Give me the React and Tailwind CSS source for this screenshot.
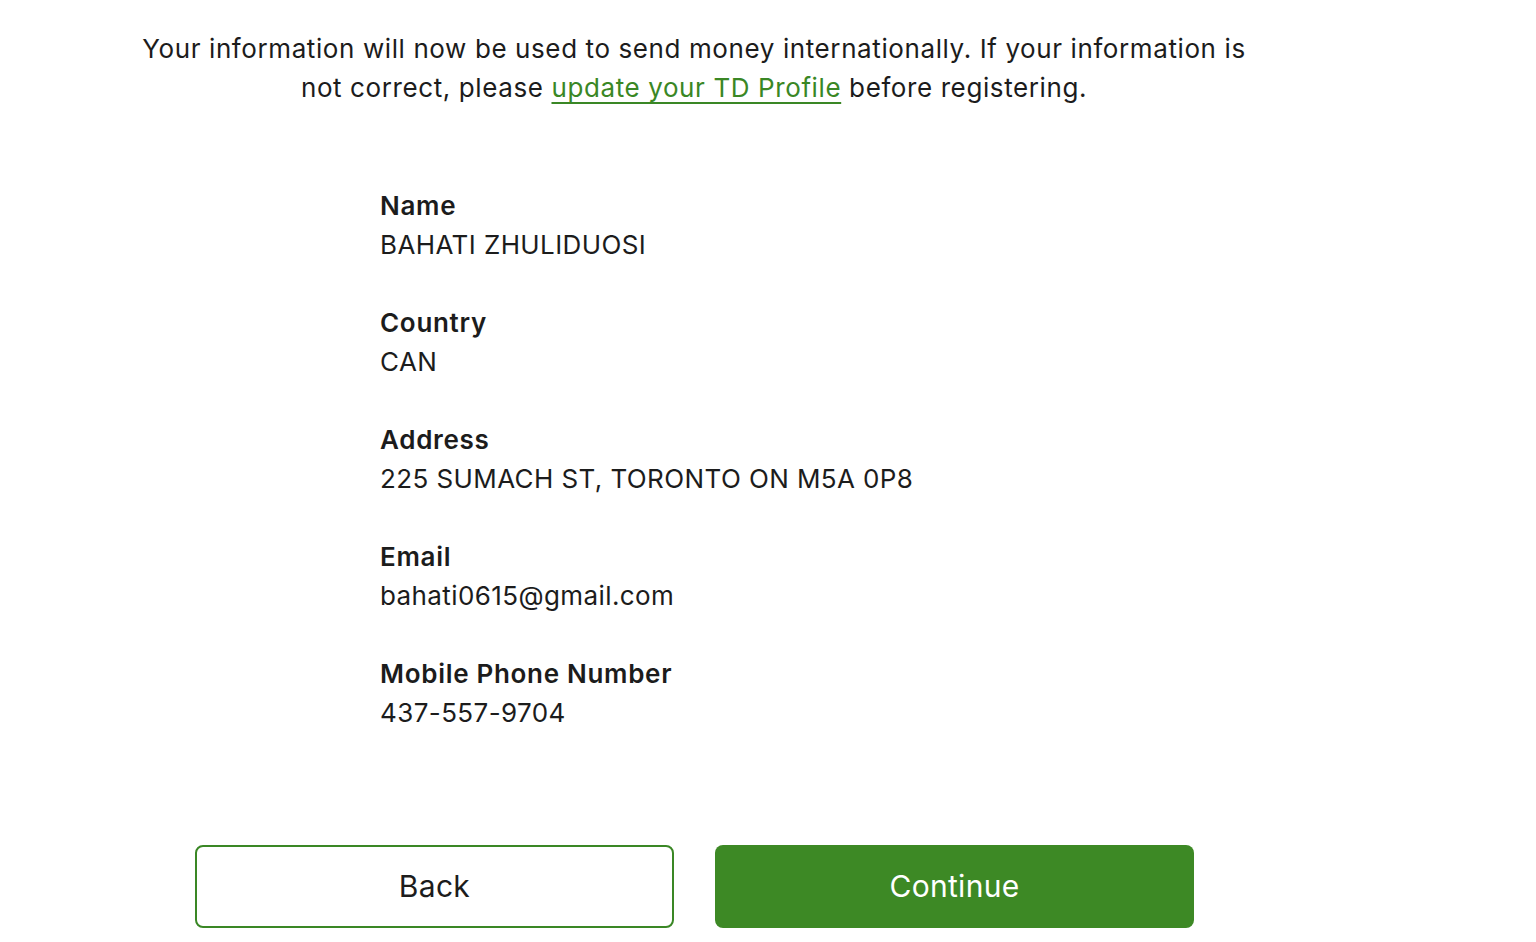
const FIELDS = [
  { label: 'Name', value: 'BAHATI ZHULIDUOSI' },
  { label: 'Country', value: 'CAN' },
  { label: 'Address', value: '225 SUMACH ST, TORONTO ON M5A 0P8' },
  { label: 'Email', value: 'bahati0615@gmail.com' },
  { label: 'Mobile Phone Number', value: '437-557-9704' },
]

export default function App() {
  return (
    <div className="min-h-screen bg-white font-['Inter','Liberation_Sans',sans-serif] text-[#1c1c1c]">
      <div className="ml-[139px] flex w-[1110px] flex-col pt-[29px]">
        <p className="whitespace-nowrap text-center text-[26px] leading-[39px] tracking-[0.6px]">
          Your information will now be used to send money internationally. If your information is
          <br />
          not correct, please{' '}
          <a href="#" className="text-[#3a8725] underline underline-offset-[5px] decoration-[1.5px]">
            update your TD Profile
          </a>{' '}
          before registering.
        </p>

        <dl className="mt-[79px] ml-[241px] flex flex-col gap-[39px] text-[26px] leading-[39px]">
          {FIELDS.map((field) => (
            <div key={field.label} className="flex flex-col">
              <dt className="font-semibold tracking-[0.7px]">{field.label}</dt>
              <dd className="tracking-[0.4px]">{field.value}</dd>
            </div>
          ))}
        </dl>

        <div className="mt-[113px] ml-[56px] flex gap-[41px]">
          <button className="h-[83px] w-[479px] rounded-lg border-2 border-[#3a8725] bg-white text-[30px] tracking-[0.3px] text-[#1c1c1c]">
            Back
          </button>
          <button className="h-[83px] w-[479px] rounded-lg bg-[#3d8925] text-[30px] tracking-[0.3px] text-white">
            Continue
          </button>
        </div>
      </div>
    </div>
  )
}
